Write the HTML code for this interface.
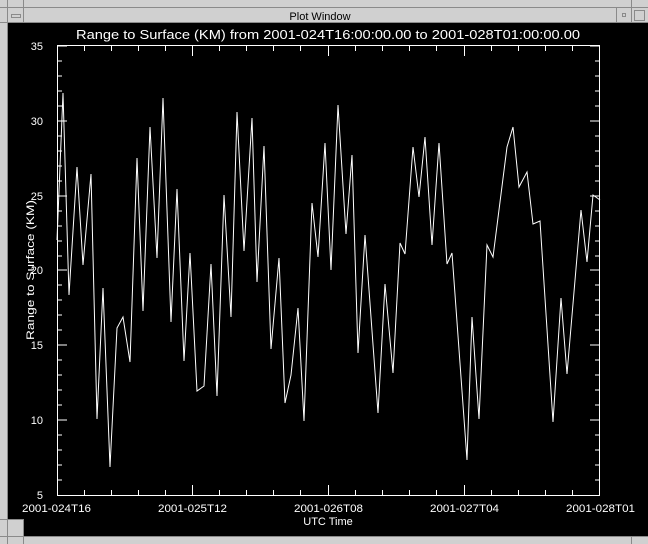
<!DOCTYPE html>
<html><head><style>
html,body{margin:0;padding:0;width:648px;height:544px;overflow:hidden;background:#000}
svg{display:block}
</style></head><body>
<svg width="648" height="544" xmlns="http://www.w3.org/2000/svg" font-family="Liberation Sans, sans-serif">
<rect width="648" height="544" fill="#000"/>
<rect x="0" y="0" width="648" height="23" fill="#d0d0d0"/>
<rect x="0" y="0" width="8" height="544" fill="#d0d0d0"/>
<rect x="0" y="536" width="648" height="8" fill="#d0d0d0"/>
<rect x="0" y="520" width="23" height="24" fill="#d0d0d0"/>
<g stroke="#8a8a8a" stroke-width="1" fill="none">
<line x1="0" y1="7.5" x2="648" y2="7.5"/>
<line x1="0" y1="22.5" x2="648" y2="22.5"/>
<line x1="7.5" y1="0" x2="7.5" y2="544"/>
<line x1="23.5" y1="0" x2="23.5" y2="23"/>
<line x1="616.5" y1="8" x2="616.5" y2="23"/>
<line x1="631.5" y1="0" x2="631.5" y2="23"/>
<line x1="0" y1="519.5" x2="23" y2="519.5"/>
<line x1="23.5" y1="519" x2="23.5" y2="544"/>
<line x1="0" y1="536.5" x2="648" y2="536.5"/>
<line x1="631.5" y1="536" x2="631.5" y2="544"/>
<rect x="11.5" y="14.5" width="9" height="3"/>
<rect x="622.5" y="13.5" width="3" height="3"/>
<rect x="634.5" y="10.5" width="10" height="10"/>
</g>
<text x="320" y="20" font-size="11" fill="#000" text-anchor="middle">Plot Window</text>
<text x="76" y="39" font-size="13" fill="#fff" textLength="504" lengthAdjust="spacingAndGlyphs">Range to Surface (KM) from 2001-024T16:00:00.00 to 2001-028T01:00:00.00</text>
<g stroke="#fff" stroke-width="1" fill="none">
<rect x="57.5" y="45.5" width="542" height="450"/>
<path d="M57 46h10M57 121h10M57 196h10M57 270h10M57 345h10M57 420h10M600 46h-10M600 121h-10M600 196h-10M600 270h-10M600 345h-10M600 420h-10"/>
<path d="
M57 61h5M57 76h5M57 91h5M57 106h5M57 136h5M57 151h5M57 166h5M57 181h5M57 211h5M57 226h5M57 241h5M57 256h5M57 285h5M57 300h5M57 315h5M57 330h5M57 360h5M57 375h5M57 390h5M57 405h5M57 435h5M57 450h5M57 465h5M57 480h5
M600 61h-5M600 76h-5M600 91h-5M600 106h-5M600 136h-5M600 151h-5M600 166h-5M600 181h-5M600 211h-5M600 226h-5M600 241h-5M600 256h-5M600 285h-5M600 300h-5M600 315h-5M600 330h-5M600 360h-5M600 375h-5M600 390h-5M600 405h-5M600 435h-5M600 450h-5M600 465h-5M600 480h-5"/>
<path d="M192.5 46v10M328.5 46v10M464.5 46v10M192.5 495v-10M328.5 495v-10M464.5 495v-10
M84.5 46v5M111.5 46v5M138.5 46v5M165.5 46v5M219.5 46v5M246.5 46v5M273.5 46v5M300.5 46v5M355.5 46v5M382.5 46v5M409.5 46v5M436.5 46v5M491.5 46v5M518.5 46v5M545.5 46v5M572.5 46v5
M84.5 495v-5M111.5 495v-5M138.5 495v-5M165.5 495v-5M219.5 495v-5M246.5 495v-5M273.5 495v-5M300.5 495v-5M355.5 495v-5M382.5 495v-5M409.5 495v-5M436.5 495v-5M491.5 495v-5M518.5 495v-5M545.5 495v-5M572.5 495v-5"/>
<polyline points="57,240 63,93 69,295 77,167 83,265 91,174 97,419 103,288 110,467 117,328 123,317 130,362 137,158 143,311 150,127 157,258 163,98 171,322 177,189 184,361 190,253 197,391 204,386 211,264 217,396 224,195 231,317 237,112 244,251 252,118 257,282 264,146 271,349 279,258 285,403 291,375 298,308 304,421 312,203 318,257 325,143 331,270 338,105 346,234 352,155 358,353 365,235 378,413 385,284 393,373 400,243 405,254 413,147 419,197 425,137 432,245 439,143 447,264 452,253 467,460 472,317 479,419 487,245 493,257 507,147 513,127 519,187 527,172 533,224 540,221 553,422 561,298 567,374 581,210 587,262 593,195 600,200"/>
</g>
<g fill="#fff" font-size="11">
<text x="43" y="50" text-anchor="end">35</text>
<text x="43" y="125" text-anchor="end">30</text>
<text x="43" y="200" text-anchor="end">25</text>
<text x="43" y="274" text-anchor="end">20</text>
<text x="43" y="349" text-anchor="end">15</text>
<text x="43" y="424" text-anchor="end">10</text>
<text x="43" y="499" text-anchor="end">5</text>
<text x="22" y="512" textLength="69" lengthAdjust="spacingAndGlyphs">2001-024T16</text>
<text x="158" y="512" textLength="69" lengthAdjust="spacingAndGlyphs">2001-025T12</text>
<text x="294" y="512" textLength="69" lengthAdjust="spacingAndGlyphs">2001-026T08</text>
<text x="430" y="512" textLength="69" lengthAdjust="spacingAndGlyphs">2001-027T04</text>
<text x="566" y="512" textLength="69" lengthAdjust="spacingAndGlyphs">2001-028T01</text>
<text x="328" y="525" text-anchor="middle">UTC Time</text>
<text transform="translate(34,270) rotate(-90)" text-anchor="middle" font-size="11" textLength="140" lengthAdjust="spacingAndGlyphs">Range to Surface (KM)</text>
</g>
</svg>
</body></html>
